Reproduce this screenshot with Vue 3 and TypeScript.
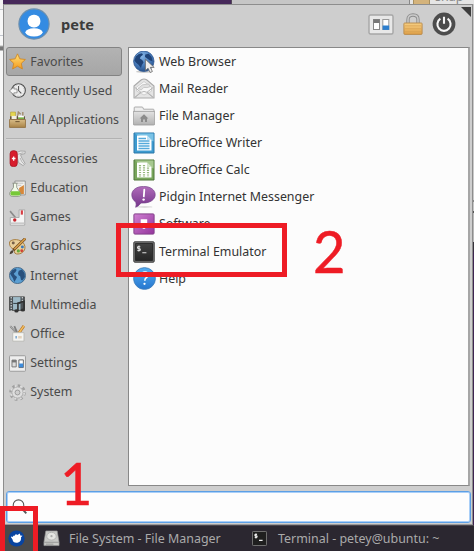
<script setup lang="ts">
interface Entry {
  label: string
  icon: string
}

const pinned: Entry[] = [
  { label: 'Favorites', icon: 'star' },
  { label: 'Recently Used', icon: 'recent' },
  { label: 'All Applications', icon: 'drawer' },
]

const categories: Entry[] = [
  { label: 'Accessories', icon: 'knife' },
  { label: 'Education', icon: 'flask' },
  { label: 'Games', icon: 'games' },
  { label: 'Graphics', icon: 'palette' },
  { label: 'Internet', icon: 'globe' },
  { label: 'Multimedia', icon: 'media' },
  { label: 'Office', icon: 'office' },
  { label: 'Settings', icon: 'toggles' },
  { label: 'System', icon: 'gear' },
]

const apps: Entry[] = [
  { label: 'Web Browser', icon: 'browser' },
  { label: 'Mail Reader', icon: 'mail' },
  { label: 'File Manager', icon: 'folder' },
  { label: 'LibreOffice Writer', icon: 'writer' },
  { label: 'LibreOffice Calc', icon: 'calc' },
  { label: 'Pidgin Internet Messenger', icon: 'pidgin' },
  { label: 'Software', icon: 'software' },
  { label: 'Terminal Emulator', icon: 'terminal' },
  { label: 'Help', icon: 'help' },
]
</script>

<template>
  <div class="desktop">
    <svg class="defs" aria-hidden="true">
      <defs>
        <linearGradient id="gBlue" x1="0" y1="0" x2="0" y2="1"><stop offset="0" stop-color="#55aef2" /><stop offset="1" stop-color="#2576cf" /></linearGradient>
        <linearGradient id="gStar" x1="0" y1="0" x2="0" y2="1"><stop offset="0" stop-color="#ffe27a" /><stop offset="1" stop-color="#f59a1c" /></linearGradient>
        <linearGradient id="gGrey" x1="0" y1="0" x2="0" y2="1"><stop offset="0" stop-color="#e2e2e2" /><stop offset="1" stop-color="#b2b2b2" /></linearGradient>
        <linearGradient id="gTan" x1="0" y1="0" x2="0" y2="1"><stop offset="0" stop-color="#d9bd88" /><stop offset="1" stop-color="#a98347" /></linearGradient>
        <linearGradient id="gGold" x1="0" y1="0" x2="0" y2="1"><stop offset="0" stop-color="#f6cf83" /><stop offset="1" stop-color="#dfa048" /></linearGradient>
        <linearGradient id="gPurple" x1="0" y1="0" x2="0" y2="1"><stop offset="0" stop-color="#b06cba" /><stop offset="1" stop-color="#74348a" /></linearGradient>
        <linearGradient id="gPink" x1="0" y1="0" x2="1" y2="1"><stop offset="0" stop-color="#cf80d2" /><stop offset="1" stop-color="#93349b" /></linearGradient>
        <linearGradient id="gDark" x1="0" y1="0" x2="0" y2="1"><stop offset="0" stop-color="#424242" /><stop offset="1" stop-color="#262626" /></linearGradient>
        <radialGradient id="gGlobe" cx=".4" cy=".25" r=".8"><stop offset="0" stop-color="#86b6e6" /><stop offset=".6" stop-color="#4478b8" /><stop offset="1" stop-color="#244c84" /></radialGradient>
      </defs>

      <symbol id="star" viewBox="0 0 16 16">
        <path d="M8 .8l2.2 4.7 5.2.6-3.8 3.6 1 5.3L8 12.4 3.4 15l1-5.3L.6 6.1l5.2-.6z" fill="url(#gStar)" stroke="#d08520" stroke-width=".8" stroke-linejoin="round" />
      </symbol>
      <symbol id="recent" viewBox="0 0 16 16">
        <circle cx="9" cy="8" r="6.4" fill="#ececec" stroke="#4d4d4d" stroke-width="1" />
        <circle cx="9" cy="8" r="5.2" fill="none" stroke="#aaa" stroke-width=".8" stroke-dasharray=".8 1.9" />
        <path d="M9 3.8V8l2.6 2.8" fill="none" stroke="#555" stroke-width="1" />
        <path d="M.4 8.4L4.6 4.6v2h3v3.6h-3v2z" fill="#f5f5f5" stroke="#777" stroke-width=".7" />
      </symbol>
      <symbol id="drawer" viewBox="0 0 16 16">
        <path d="M1.5 1h4.6v7H1.5z" fill="#e4d650" stroke="#b39f35" stroke-width=".6" />
        <path d="M8 6l.8-5 2.2 2M13 7V1" fill="none" stroke="#a08a6c" stroke-width="1.3" />
        <path d="M1 5h14v5H1z" fill="#5d4e3c" />
        <path d="M2.4 4.6h4.8v3H2.4z" fill="#f1eee2" /><path d="M8.6 4.4H14v2.8H8.6z" fill="#fff" /><path d="M8.6 6h5.4v1.5H8.6z" fill="#76b041" />
        <path d="M.5 8h15v7.5H.5z" fill="url(#gTan)" stroke="#927143" stroke-width=".8" />
        <path d="M6 10h4" stroke="#6f5734" />
      </symbol>
      <symbol id="knife" viewBox="0 0 16 16">
        <path d="M7 2.2Q11 .2 15.3 1.2L15 3.4l-4.2 1 1.3 3.2 3 5-1.7 2.2-4.4-3-1-4z" fill="#e6e6e6" stroke="#999" stroke-width=".7" />
        <path d="M10.5 7.5q1 4 4 6M8.5 4l5-1.5" fill="none" stroke="#aaa" stroke-width=".8" />
        <rect x="1" y=".6" width="6.8" height="15" rx="3" fill="#d81d2d" stroke="#a41220" stroke-width=".7" />
        <path d="M4.4 6v4M2.7 8h3.4" stroke="#fff" stroke-width="1.2" />
      </symbol>
      <symbol id="flask" viewBox="0 0 16 16">
        <path d="M5.5 1h9.8v13H7z" fill="#f3f3ef" stroke="#888" stroke-width=".8" />
        <path d="M9.5 7.5L14 4.6v8.6H9.8z" fill="#d6873a" />
        <path d="M8 3h5.5M8.5 5h3" stroke="#bbb" stroke-width=".8" />
        <path d="M3.2 3h5M4.2 3v4L.9 11.7C0 14 1.3 15.4 3 15.4h6c2 0 2.6-1.8 1.6-3.5L7.3 7V3" fill="#f3fbe9" stroke="#858b7e" stroke-width=".8" />
        <path d="M2 10.6h7.8c1.5 2.7.6 4-1.2 4H3.1C1 14.6 1 12.5 2 10.6z" fill="#76c837" />
      </symbol>
      <symbol id="games" viewBox="0 0 16 16">
        <path d="M1 2l5 6" stroke="#8b8b8b" stroke-width="1.5" />
        <path d="M1.2 8h8.3V.8h5.3v14.4H1.2z" fill="#f4f4f4" stroke="#a3a3a3" stroke-width=".8" />
        <path d="M1.5 13.4h13" stroke="#c9c9c9" stroke-width="1.6" />
        <circle cx="5.4" cy="10.3" r="1.6" fill="#c7252d" /><path d="M11.1 1.3h2v4h-2z" fill="#d83c42" />
      </symbol>
      <symbol id="palette" viewBox="0 0 16 16">
        <path d="M1 3c4-3 13-1.5 14 5 .5 5-4 7.5-8 7-3-.3-1-4-3.5-5C1 9-.5 5 1 3z" fill="#ead09a" stroke="#a47b3e" stroke-width=".9" />
        <circle cx="4" cy="4.8" r="1.4" fill="#776149" /><circle cx="12.6" cy="8.4" r="1.4" fill="#3d79ba" /><circle cx="8.8" cy="12.2" r="1.5" fill="#62a83b" /><circle cx="12" cy="12" r="1.4" fill="#d04236" />
        <path d="M15.4.4L4 11.6" stroke="#6d451e" stroke-width="2.6" /><path d="M15.4.4L5 10.6" stroke="#dca34b" stroke-width="1.4" />
        <path d="M.6 15.4c.2-3 1.7-4 3.4-3.8.5 2-1 3.6-3.4 3.8z" fill="#4b4035" />
      </symbol>
      <symbol id="globe" viewBox="0 0 16 16">
        <circle cx="8" cy="8" r="7.6" fill="#5c9fd2" stroke="#355777" stroke-width=".7" />
        <path d="M1 6l2-3 3-1.4 1.2 1.2L6 5l-1.5 1 .7 1.5 2.4 1.8-1.3 2.6L5 14l-1.3-3.5L2 8zM9.2 3.6l3-1.2 2.4 3.3.4 3.6-2.4 3.4-1.3-.4-.8-3.6-1.5-.9-.5-2z" fill="#28507c" />
      </symbol>
      <symbol id="media" viewBox="0 0 16 16">
        <path d="M.5.8h14v12.7H.5z" fill="#4d5357" stroke="#3b3b3b" stroke-width=".7" />
        <path d="M3.8 1h7v12h-7z" fill="#9db9c6" /><path d="M2.1 1v13M12.6 1v4" stroke="#c3cacd" stroke-width="1.3" stroke-dasharray="1.3 1.2" /><path d="M4 7h7" stroke="#39464c" />
        <path d="M8.4 14V6.6L14.2 5v8" fill="none" stroke="#303030" stroke-width="1.5" /><ellipse cx="7" cy="14" rx="2" ry="1.5" fill="#333" /><ellipse cx="13" cy="13.2" rx="2" ry="1.5" fill="#333" />
      </symbol>
      <symbol id="office" viewBox="0 0 16 16">
        <path d="M14 .8L9 8" stroke="#b9782a" stroke-width="2.6" /><path d="M14 .8L9 8" stroke="#f4c062" stroke-width="1.3" />
        <path d="M1.2 1L7.2 8M5 1l2.6 6" stroke="#808080" stroke-width="1.7" /><path d="M1.2 1L7.2 8" stroke="#ccc" stroke-width=".6" />
        <path d="M3.5 7.2h10.6v8H3.5z" fill="#f5f5f2" stroke="#b8b8b4" stroke-width=".8" />
        <path d="M6 10.3h1.5v2.4H6z" fill="#83aacf" /><path d="M8.6 10.3H12v2.4H8.6z" fill="#e3d2bd" />
      </symbol>
      <symbol id="toggles" viewBox="0 0 16 16">
        <rect x=".5" y=".7" width="15" height="14.6" rx=".7" fill="#eee" stroke="#999" stroke-width=".9" />
        <path d="M2.8 4.8h4v6.4h-4z" fill="#ddd" stroke="#777" stroke-width=".9" /><path d="M2.8 4.8h4v2.2h-4z" fill="#777" />
        <path d="M9.3 4.6h4.2v7.2H9.3z" fill="#fff" stroke="#666" stroke-width=".9" /><path d="M9.5 8h3.9v3.6H9.5z" fill="#3d8cdc" />
      </symbol>
      <symbol id="gear" viewBox="0 0 16 16">
        <circle cx="8" cy="8" r="6.7" fill="none" stroke="#a0a0a0" stroke-width="2.2" stroke-dasharray="2.6 2.66" />
        <circle cx="8" cy="8" r="5.3" fill="#dedede" stroke="#a0a0a0" stroke-width=".8" />
        <circle cx="8" cy="8" r="6.3" fill="none" stroke="#dedede" stroke-width="1.6" stroke-dasharray="1.6 3.66" stroke-dashoffset="-.5" />
        <circle cx="8" cy="8" r="2.3" fill="#cecece" stroke="#999" stroke-width=".9" />
      </symbol>

      <symbol id="browser" viewBox="0 0 22 22">
        <ellipse cx="11" cy="20.7" rx="8" ry="1.2" fill="#ccc" />
        <circle cx="10.8" cy="10.3" r="10.2" fill="url(#gGlobe)" stroke="#2c5590" stroke-width=".8" />
        <path d="M1.4 9.5L2.8 5.5l3-2.6 3.2-.7 1 1.5-2.4 2-.8 1.7 2.4 1.7 1.4 2.2-1.8 3-.9 2.7-2.4-3.2-2.4-2.1zM12.2 3.4l3.6-.6 2.8 3.2.9 4.3-2.5-.9-2.8-1.9-2.2-1.6z" fill="#1f4378" />
        <path d="M12.4 8.2v11.4l2.7-2.3 2 4.2 2.3-1-2-4.1h3.8z" fill="#eee" stroke="#666" stroke-width=".8" />
      </symbol>
      <symbol id="mail" viewBox="0 0 22 22">
        <path d="M1 8L8.4 1.8q2.6-1.7 5.2 0L21 8v12H1z" fill="#e4e4e4" stroke="#aaa" stroke-width="1.1" />
        <path d="M3.5 9.2L11 3.5l7.5 5.7v4L11 17l-7.5-4z" fill="#f7f7f7" stroke="#c8c8c8" stroke-width=".8" />
        <path d="M1.5 9.2l6.4 5L1.5 19.5M20.5 9.2l-6.4 5 6.4 5.3M2 19.5l6.2-5.2q2.8-1.7 5.6 0l6.2 5.2" fill="none" stroke="#b6b6b6" stroke-width="1" />
        <path d="M5 10.4l4.6-3.6 6-.8 1.8 2.6-3.2 1-3.4-.2-2.6 2.6z" fill="#e0e0e0" stroke="#b8b8b8" stroke-width=".7" />
      </symbol>
      <symbol id="folder" viewBox="0 0 22 22">
        <path d="M1.2 8V2.8q0-.8.8-.8h7q.8 0 1 .8l.5 1.4h9.700q.8 0 .8.8v3z" fill="#eee" stroke="#999" stroke-width=".8" />
        <path d="M.3 6.4h21.4V19q0 1-1 1H1.3q-1 0-1-1z" fill="url(#gGrey)" stroke="#999" stroke-width=".8" />
        <path d="M11 9.2l4.4 4.2H14V17h-2v-2.5h-2V17H8v-3.6H6.6z" fill="#8b8b8b" />
      </symbol>
      <symbol id="writer" viewBox="0 0 22 22">
        <path d="M1 1h20v20H1z" fill="#3d9bd0" stroke="#2b76a8" />
        <path d="M1.5 1.5h19v8z" fill="#79c2e6" /><path d="M4 3.5h10l4.5 4.5v10.5H4z" fill="#fff" /><path d="M14 3.5V8h4.5z" fill="#bfe1f5" />
        <path d="M5.5 6.5h7.5M5.5 9h11M5.5 11.5h11M5.5 14h11M5.5 16.5h11" stroke="#55aadb" stroke-width="1.3" />
      </symbol>
      <symbol id="calc" viewBox="0 0 22 22">
        <path d="M1 1h20v20H1z" fill="#79a65c" stroke="#4f7638" />
        <path d="M1.5 1.5h19v8z" fill="#a7c890" /><path d="M4 3.5h10l4.5 4.5v10.5H4z" fill="#fff" /><path d="M14 3.5V8h4.5z" fill="#d2e5c8" />
        <path d="M7 6v12M11 6v12M15 8.5V18" stroke="#95b87d" stroke-width="2.2" stroke-dasharray="1.2 1.1" />
      </symbol>
      <symbol id="pidgin" viewBox="0 0 24 22">
        <ellipse cx="13" cy="20.9" rx="8" ry="1" fill="#ddd" />
        <path d="M12 .4c6.8 0 11.7 3.4 11.7 8.3S18.5 17 11.8 17H9.5q-2 2.9-5.3 4.3.8-2.7.2-5C1.8 14.3.3 11.9.3 8.7.3 3.8 5.4.4 12 .4z" fill="url(#gPurple)" stroke="#74408a" stroke-width=".7" />
        <path d="M12.8 3.6l-.5 6.8" stroke="#fff" stroke-width="1.8" stroke-linecap="round" /><circle cx="12.1" cy="13.6" r="1.2" fill="#fff" />
      </symbol>
      <symbol id="software" viewBox="0 0 22 22">
        <rect x=".9" y=".9" width="20.2" height="20.2" rx="1" fill="url(#gPink)" stroke="#84408a" />
        <path d="M7.7 6.2h6.5v7h-2v2.5H9.7v-2.5h-2z" fill="#fff" />
      </symbol>
      <symbol id="terminal" viewBox="0 0 22 22">
        <rect x=".8" y=".8" width="20.4" height="20.4" rx="1" fill="#777" stroke="#3c3c3c" />
        <path d="M2.5 2.5h17v17h-17z" fill="url(#gDark)" stroke="#222" stroke-width=".8" />
        <path d="M7.3 5.8Q4.5 5.1 4.5 6.4T6 7.6t1.3 1.1q0 1.3-2.9.7M6 4.6v6M9.3 11.8h4.1" fill="none" stroke="#ddd" stroke-width="1.1" />
      </symbol>
      <symbol id="help" viewBox="0 0 22 22">
        <circle cx="11" cy="11" r="10.4" fill="url(#gBlue)" stroke="#3f7fbd" stroke-width=".9" />
        <path d="M8 7.8q.3-3 3.5-3 3.1 0 3.1 2.7 0 1.6-1.8 2.7-1.5 1-1.5 3" fill="none" stroke="#fff" stroke-width="1.5" /><circle cx="11" cy="16.1" r="1.1" fill="#fff" />
      </symbol>
    </svg>

    <div class="backdrop">
      <div class="purple"></div>
      <div class="window-edge"><i class="mini-folder"></i><span>snap</span></div>
    </div>

    <div class="middle">
      <div class="left-strip"></div>
      <main class="menu">
        <header class="header">
          <svg class="avatar" viewBox="0 0 32 32">
            <circle cx="16" cy="16" r="15.1" fill="#348be2" stroke="#6c8fae" stroke-width="1.2" />
            <rect x="9.6" y="6.8" width="12.8" height="12.6" rx="6" fill="#fff" />
            <ellipse cx="16" cy="24.3" rx="8.6" ry="4.1" fill="#fff" />
          </svg>
          <span class="user">pete</span>
          <div class="actions">
            <svg class="a-settings" viewBox="0 0 26 21">
              <rect x="1" y="1" width="24" height="19" rx="1.5" fill="#e8e8e8" stroke="#a6a6a6" stroke-width="1.4" />
              <rect x="5.5" y="5.5" width="6" height="10" fill="#fff" stroke="#888" /><path d="M5.5 5.5h6V9h-6z" fill="#777" />
              <rect x="14.8" y="5.5" width="6" height="10" fill="#fff" stroke="#999" /><path d="M14.6 11.5h6.6v4.4h-6.600z" fill="#2d7ecd" />
            </svg>
            <svg class="a-lock" viewBox="0 0 20 22">
              <path d="M5 11V6.5Q5 2 10 2t5 4.5V11" fill="none" stroke="#8c8c8c" stroke-width="3.3" /><path d="M5 11V6.5Q5 2 10 2t5 4.5V11" fill="none" stroke="#cacaca" stroke-width="1.5" />
              <rect x=".9" y="10" width="18.2" height="11.4" rx=".8" fill="url(#gGold)" stroke="#b78848" stroke-width=".9" />
              <path d="M2 12.8h16M2 15.7h16M2 18.6h16" stroke="#d9a252" stroke-width=".7" />
            </svg>
            <svg class="a-power" viewBox="0 0 24 24">
              <circle cx="12" cy="12" r="11.4" fill="#4c4c4c" /><path d="M8.400 6.700a6.600 6.600 0 1 0 7.200 0M12 4.700v7" fill="none" stroke="#f6f6f6" stroke-width="2.100" />
            </svg>
          </div>
          <i class="resize"></i>
        </header>

        <section class="content">
          <nav class="sidebar">
            <button v-for="(item, i) in pinned" :key="item.label" class="cat" :class="{ active: i === 0 }">
              <svg class="ic16"><use :href="'#' + item.icon" /></svg><span>{{ item.label }}</span>
            </button>
            <hr class="rule" />
            <button v-for="item in categories" :key="item.label" class="cat">
              <svg class="ic16"><use :href="'#' + item.icon" /></svg><span>{{ item.label }}</span>
            </button>
          </nav>
          <div class="list">
            <div v-for="app in apps" :key="app.label" class="app">
              <svg class="ic22" :class="app.icon"><use :href="'#' + app.icon" /></svg><span>{{ app.label }}</span>
            </div>
          </div>
        </section>

        <div class="search">
          <svg viewBox="0 0 16 16"><circle cx="6.5" cy="6.2" r="5.3" fill="none" stroke="#555" stroke-width="1.1" /><path d="M10.3 10l4 4.3" stroke="#555" stroke-width="1.9" /></svg>
        </div>
      </main>
      <div class="right-strip"></div>
    </div>

    <footer class="taskbar">
      <div class="start">
        <svg viewBox="0 0 18 18"><circle cx="9" cy="9" r="8.6" fill="#0844a0" /><path d="M3 7.400q.8-1 2.200 0 .2-2.400 2-1.400.8-2.400 2.600-.8L12.600 3.600l.4 2.200 2.400.2-1.600 1.800q.8 4.800-3.800 5.600-4.600.6-5.200-3.400z" fill="#fff" /></svg>
      </div>
      <div class="task files">
        <svg viewBox="0 0 18 18"><path d="M3 1h12l2 12v3.500H1V13z" fill="#c9c9c7" stroke="#999" stroke-width=".7" /><ellipse cx="9" cy="6.600" rx="5" ry="4.100" fill="#e5e5e2" stroke="#aaa" stroke-width=".8" /><circle cx="9" cy="6.600" r="1.200" fill="#aaa" /><path d="M1.300 13h15.500M3 15h8" stroke="#888" stroke-width=".8" /></svg>
        <span>File System - File Manager</span>
      </div>
      <div class="task term">
        <svg viewBox="0 0 16 16"><rect x=".5" y=".5" width="15" height="15" rx=".8" fill="#1f1f1f" stroke="#777" /><path d="M5.4 3.6Q3 3 3 4.2t1.3 1 1.2 1Q5.4 7.3 2.9 6.7M4.2 2.6v5.5M7.5 10h3.8" fill="none" stroke="#eee" stroke-width="1.1" /></svg>
        <span>Terminal - petey@ubuntu: ~</span>
      </div>
    </footer>

    <div class="mark box-start"></div>
    <div class="mark box-term"></div>
    <span class="digit one">1</span>
    <span class="digit two">2</span>
  </div>
</template>

<style>
body { overflow: hidden; }
</style>

<style scoped>
.desktop { position: relative; width: 474px; height: 551px; overflow: hidden; background: #cecece; font-family: "Noto Sans", sans-serif; font-size: 12.4px; color: #474747; display: flex; flex-direction: column; }
.desktop * { box-sizing: border-box; }
.defs { position: absolute; width: 0; height: 0; }
.backdrop { display: flex; height: 4px; flex: none; padding-left: 3px; background: #f2f2f2; }
.purple { width: 229px; background: #46285a; border-right: 1px solid #554a5b; }
.window-edge { flex: 1; display: flex; overflow: hidden; background: linear-gradient(90deg, #c6c6c6 177px, #888 177px 178px, #e5e5e5 178px); padding-left: 181px; color: #888; }
.window-edge span { margin: -11px 0 0 5px; line-height: 16px; font-size: 12.5px; }
.mini-folder { width: 17px; height: 4px; background: #d4b37b; border: solid #a8905e; border-width: 0 1px; }
.middle { display: flex; height: 521px; flex: none; }
.left-strip { width: 3px; background: linear-gradient(#f2f2f2 5px, #c2c6ce 5px 6px, #f8f8f8 6px 31px, #c2c6ce 31px 32px, #f8f8f8 32px 41px, #777 43px 46px, #f8f8f8 47px); }
.right-strip { flex: 1; background: linear-gradient(#c9c9c9 196px, #888 196px 198px, #c6c6c6 198px 207px, #555 207px 209px, #b8b8b8 209px 238px, #37323b 238px 245px, #3e2352 250px); }
.menu { width: 470px; background: #cecece; border: 1px solid #8d8d8d; border-bottom-color: #999; padding: 0 1px 1px 2px; display: flex; flex-direction: column; }
.header { position: relative; height: 42px; flex: none; display: flex; align-items: center; padding: 0 15px 4px 12px; }
.avatar { width: 32px; height: 32px; }
.user { margin-left: 11px; font-weight: 700; font-size: 14.6px; line-height: 20px; color: #3c3c3c; }
.actions { margin-left: auto; display: flex; align-items: center; }
.a-settings { width: 26px; height: 21px; margin-right: 9px; }
.a-lock { width: 20px; height: 22px; margin-right: 9px; }
.a-power { width: 24px; height: 24px; }
.resize { position: absolute; right: 0; top: 2px; border-top: 10px solid #3d3d3d; border-left: 10px solid transparent; }
.content { height: 439px; flex: none; display: flex; gap: 6px; }
.sidebar { width: 116px; display: flex; flex-direction: column; }
.cat { display: flex; align-items: center; width: 116px; height: 29.2px; flex: none; padding: 0 0 0 2px; border: 1px solid transparent; border-radius: 3px; background: transparent; color: #4a4a4a; font: inherit; line-height: 18px; text-align: left; white-space: nowrap; }
.cat.active { background: linear-gradient(#b3b3b3, #a6a6a6); border-color: #838383; }
.ic16 { width: 17px; height: 17px; flex: none; margin-right: 4.3px; }
.rule { width: 116px; height: 2px; margin: 3.8px 0 3.9px; border: 0; border-top: 1px solid #b2b2b2; border-bottom: 1px solid #d7d7d7; flex: none; }
.list { width: 342px; height: 439px; background: #fcfcfc; border: 1px solid #888; border-right: 2px solid #a6a6a6; }
.app { display: flex; align-items: center; height: 27.15px; padding-left: 4px; color: #333; line-height: 18px; white-space: nowrap; }
.ic22 { width: 22px; height: 22px; flex: none; margin-right: 4px; }
.ic22.pidgin { width: 25px; margin-left: -2px; margin-right: 3px; }
.ic22.help { width: 23px; height: 23px; margin-right: 3px; }
.search { margin-top: 5px; height: 32px; flex: none; border: 1px solid #5c9fe5; border-radius: 3px; background: #fdfdfd; padding: 7px 0 0 5px; box-shadow: inset 0 0 0 1px #a9cff8; }
.search svg { width: 16px; height: 16px; }
.taskbar { display: flex; align-items: center; flex: 1; background: #2b2730; color: #aaa; border-top: 1px solid #4a454d; }
.start { width: 33px; height: 100%; background: #4a4a4a; display: flex; align-items: center; padding-left: 8px; }
.start svg { width: 17px; height: 17px; }
.task { display: flex; align-items: center; white-space: nowrap; line-height: 18px; font-size: 12.45px; }
.task svg { width: 17px; height: 17px; flex: none; }
.files { margin-left: 10px; width: 209px; }
.files span { margin-left: 9px; }
.task.term svg { width: 15px; height: 15px; }
.term span { margin-left: 11px; }
.mark { position: absolute; border: 5px solid #ee1c25; }
.box-start { left: 0; top: 506px; width: 38px; height: 60px; }
.box-term { left: 116px; top: 223px; width: 171px; height: 54px; }
.digit { position: absolute; font-family: Lato, sans-serif; color: #ee1c25; font-size: 59px; line-height: 60px; -webkit-text-stroke: 0.5px #ee1c25; transform-origin: 0 0; transform: scaleX(0.95); }
.one { left: 60px; top: 453px; }
.two { left: 313px; top: 221px; }
</style>
